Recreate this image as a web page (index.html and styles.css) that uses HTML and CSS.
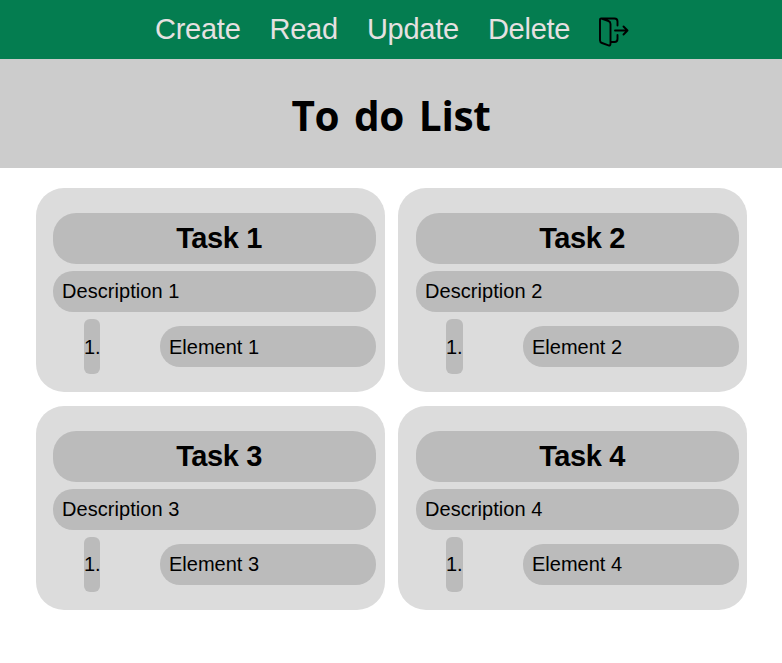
FILE: index.html
```html
<!DOCTYPE html>
<html lang="en">
<head>
<meta charset="utf-8">
<title>To do List</title>
<link rel="stylesheet" href="styles.css">
</head>
<body>
<nav class="navbar">
  <a class="nav-link">Create</a>
  <a class="nav-link">Read</a>
  <a class="nav-link">Update</a>
  <a class="nav-link">Delete</a>
  <svg class="exit" viewBox="0 0 30 30" fill="none" stroke="#000" stroke-width="1.900" stroke-linecap="round" stroke-linejoin="round"><path d="M2.500 1.500 H15.500 Q18.500 1.500 18.500 4.500 V8.500 M18.500 18 V22 Q18.500 25 15.500 25 H12 M2.500 1.500 L9.500 4 Q11.500 4.800 11.500 7 V26.500 Q11.500 29 9.500 28.300 L3 26 Q1 25.300 1 23.500 V3 Q1 1.200 2.500 1.500 M16 13.500 H28.500 M24.500 9.500 L28.500 13.500 L24.500 17.500"/></svg>
</nav>
<header class="title-bar"><h1 class="title">To do List</h1></header>
<main class="tasks">
  <section class="card">
    <h2 class="name">Task 1</h2>
    <p class="description">Description 1</p>
    <div class="item"><span class="number">1.</span><span class="element">Element 1</span></div>
  </section>
  <section class="card">
    <h2 class="name">Task 2</h2>
    <p class="description">Description 2</p>
    <div class="item"><span class="number">1.</span><span class="element">Element 2</span></div>
  </section>
  <section class="card">
    <h2 class="name">Task 3</h2>
    <p class="description">Description 3</p>
    <div class="item"><span class="number">1.</span><span class="element">Element 3</span></div>
  </section>
  <section class="card">
    <h2 class="name">Task 4</h2>
    <p class="description">Description 4</p>
    <div class="item"><span class="number">1.</span><span class="element">Element 4</span></div>
  </section>
</main>
</body>
</html>
```
FILE: styles.css
```css
* { box-sizing: border-box; }
body { margin: 0; background: #fff; color: #000; font-family: "Liberation Sans", Arial, sans-serif; }
.navbar { display: flex; height: 59px; padding-left: 155px; background: #047d50; }
.nav-link { margin-right: 29px; color: #e6e1e1; font-size: 29px; line-height: 59px; letter-spacing: -0.25px; }
.exit { width: 30px; height: 30px; margin: 17px 0 0; }
.title-bar { height: 109px; background: #ccc; text-align: center; }
.title { margin: 0; font: bold 40.5px/113px "Open Sans", "Noto Sans", sans-serif; letter-spacing: -0.3px; word-spacing: 4.5px; }
.tasks { display: grid; grid-template-columns: 349px 349px; gap: 14px 13px; padding: 20px 0 0 36px; }
.card { height: 204px; padding: 25px 9px 0 17px; border-radius: 28px; background: #dcdcdc; }
.card:nth-child(even) { padding-right: 8px; padding-left: 18px; }
.name { height: 51px; margin: 0 0 7px; padding-left: 9px; border-radius: 23px; background: #bbb; font-size: 29px; line-height: 50px; letter-spacing: -0.4px; text-align: center; }
.description { height: 41px; margin: 0 0 7px; padding-left: 9px; border-radius: 20px; background: #bbb; font-size: 20px; line-height: 40px; letter-spacing: 0.05px; }
.item { display: flex; align-items: center; height: 55px; padding-left: 31px; font-size: 20px; }
.number { width: 16px; height: 55px; border-radius: 6px; background: #bbb; line-height: 56px; }
.card:nth-child(even) .item { padding-left: 30px; }
.card:nth-child(even) .number { width: 17px; }
.element { width: 216px; height: 41px; margin-left: 60px; padding-left: 9px; border-radius: 20px; background: #bbb; line-height: 42px; }
.card:nth-child(n+3) .number { line-height: 55px; }
.card:nth-child(n+3) .element { line-height: 41px; }
```
